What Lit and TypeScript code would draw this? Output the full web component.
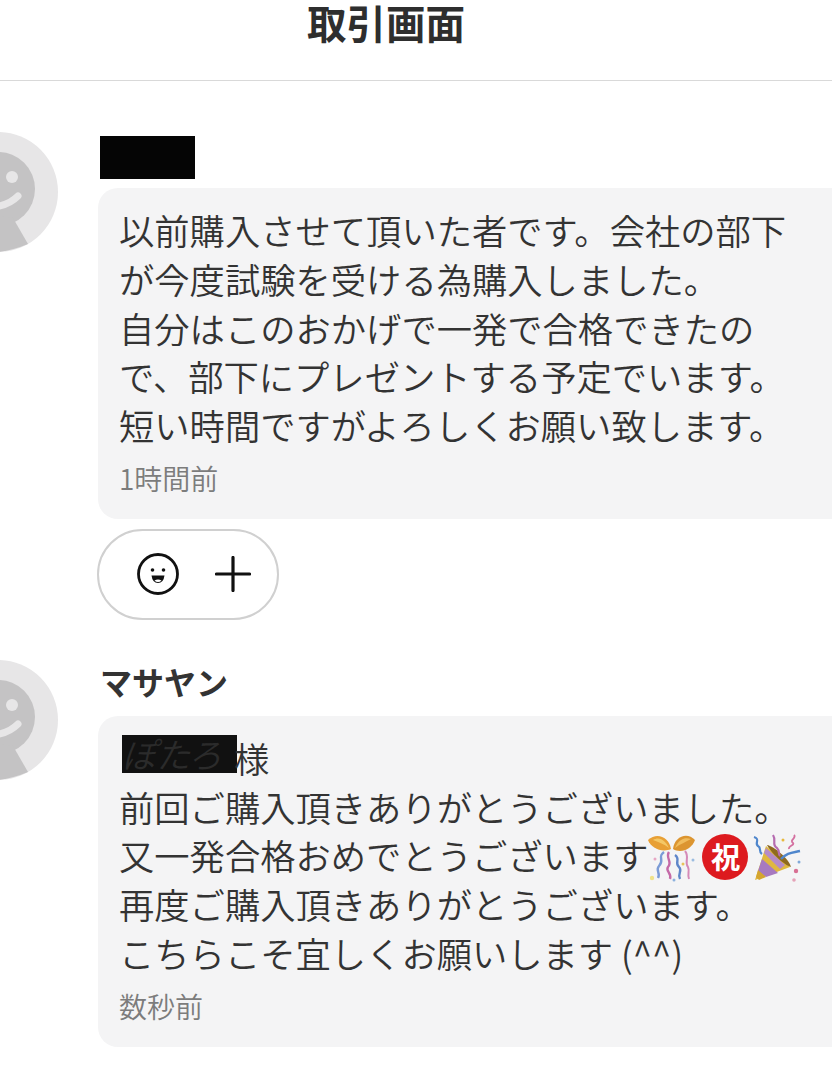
import { LitElement, html, css, svg } from "lit";
import { customElement } from "lit/decorators.js";

const avatar = svg`<svg class="avatar" viewBox="0 0 58 120" width="58" height="120">
  <circle cx="-2" cy="60" r="60" fill="#e7e6e7"/>
  <circle cx="-2" cy="57" r="37" fill="#c4c3c4"/>
  <path d="M-40 80 L13 86 L28 112 Q14 118 -2 120 L-40 120 Z" fill="#c4c3c4"/>
  <circle cx="12" cy="45" r="6" fill="#e7e6e7"/>
  <path d="M-14 75 Q6 76 18 64" fill="none" stroke="#e7e6e7" stroke-width="7" stroke-linecap="round"/>
</svg>`;

const smile = svg`<svg viewBox="0 0 44 44" width="44" height="44">
  <circle cx="22" cy="22" r="19.5" fill="none" stroke="#111" stroke-width="2.800"/>
  <circle cx="16.5" cy="18" r="1.800" fill="#111"/>
  <circle cx="27.500" cy="18" r="1.800" fill="#111"/>
  <path d="M15.500 23.500 H28.500 Q27.500 31 22 31 Q16.500 31 15.500 23.500 Z" fill="#111"/>
  <path d="M18.500 28.500 Q22 26.300 25.500 28.500 Q24 30 22 30 Q20 30 18.500 28.500 Z" fill="#fff"/>
</svg>`;

const plus = svg`<svg viewBox="0 0 36 36" width="36" height="36">
  <path d="M18 1.500 V34.500 M1.500 18 H34.500" stroke="#111" stroke-width="3.200" stroke-linecap="round"/>
</svg>`;

const confetti = svg`<svg class="emoji" viewBox="0 0 48 48" width="48" height="48">
  <path d="M23 15 C21 3 9 -2 0 6 C3 14 14 19 23 15 Z" fill="#e8a035"/>
  <path d="M25 15 C26 3 39 -3 47 6 C44 15 33 20 25 15 Z" fill="#dc9530"/>
  <path d="M21 14 C16 4 10 3 5 6 C10 8 16 10 21 14 Z" fill="#f4c866"/>
  <path d="M27 14 C31 4 38 3 43 5 C38 8 32 10 27 14 Z" fill="#f0bc5c"/>
  <path d="M16 18 C9 23 17 26 11 32 C7 36 13 39 10 44" fill="none" stroke="#7b9bd6" stroke-width="2.400"/>
  <path d="M21 18 C17 24 25 28 20 33 C17 37 24 39 22 45" fill="none" stroke="#c56aa8" stroke-width="2.400"/>
  <path d="M27 21 C33 25 26 29 31 33 C35 37 29 39 32 45" fill="none" stroke="#5f86c9" stroke-width="2.400"/>
  <path d="M37 17 C42 23 36 28 40 33 C42 37 39 40 41 45" fill="none" stroke="#d58ab8" stroke-width="2"/>
  <circle cx="4" cy="44" r="2.200" fill="#f0e28a"/>
  <circle cx="7" cy="25" r="1.500" fill="#e7a7c4"/>
  <circle cx="45" cy="26" r="1.500" fill="#9bbce0"/>
  <circle cx="26" cy="46" r="1.500" fill="#8db2de"/>
  <circle cx="35" cy="30" r="1.500" fill="#e8c45a"/>
</svg>`;

const popper = svg`<svg class="emoji" viewBox="0 0 48 48" width="48" height="48">
  <path d="M2 46 L13 12 L37 33 Z" fill="#e0b83f"/>
  <path d="M5 37 L9 25 L25 39 L13 43 Z" fill="#a77ac0"/>
  <path d="M3 43 L5 36 L13 43 L6 46 Z" fill="#d5a52f"/>
  <path d="M11 19 L13 14 L32 31 L27 35 Z" fill="#b58bc8"/>
  <path d="M14 11 C21 12 36 25 38 33 C31 31 18 19 14 11 Z" fill="#8f6a1e"/>
  <path d="M1 3 C8 5 1 9 5 12 C9 14 5 17 9 20" fill="none" stroke="#4f86cc" stroke-width="2.200"/>
  <path d="M20 1 C24 7 18 10 24 14 C27 17 25 20 27 22" fill="none" stroke="#b66cb0" stroke-width="2.200"/>
  <path d="M41 1 C44 4 36 6 40 9 C42 11 35 12 36 15" fill="none" stroke="#d470a0" stroke-width="1.800"/>
  <path d="M28 25 C34 19 38 19 47 17" fill="none" stroke="#4f86cc" stroke-width="2.400"/>
  <circle cx="43" cy="37" r="2.200" fill="#d86f93"/>
  <circle cx="41" cy="46" r="1.800" fill="#e5a3b8"/>
  <circle cx="30" cy="6" r="1.500" fill="#e8b93d"/>
  <circle cx="46" cy="28" r="1.500" fill="#7fa8d8"/>
</svg>`;

@customElement("app-root")
export class AppRoot extends LitElement {
  static styles = css`
    :host {
      display: block;
      width: 832px;
      height: 1080px;
      overflow: hidden;
      background: #fff;
      color: #333;
      font-family: "Noto Sans CJK JP", "Liberation Sans", sans-serif;
    }
    .header {
      height: 81px;
      box-sizing: border-box;
      border-bottom: 1px solid #d9d9d9;
      padding-right: 60px;
      text-align: center;
      font-size: 39.500px;
      line-height: 44px;
      font-weight: 700;
      color: #2e2e2e;
    }
    .thread { display: flex; flex-direction: column; padding-top: 51px; }
    .msg { display: grid; grid-template-columns: 98px 1fr; }
    .msg + .msg { margin-top: 40px; }
    .avatar { display: block; }
    .name {
      box-sizing: border-box;
      height: 56px;
      padding: 4px 0 0 2px;
      font-size: 32px;
      line-height: 34px;
      font-weight: 700;
      color: #333;
    }
    .redact-name {
      display: block;
      width: 95px;
      height: 43px;
      background: #050505;
    }
    .bubble {
      background: #f4f4f5;
      border-radius: 20px 0 0 20px;
      padding: 18px 0 23px 21px;
    }
    .text {
      font-size: 35.300px;
      line-height: 48.750px;
      white-space: nowrap;
      font-weight: 350;
    }
    .redact-text {
      display: inline-block;
      width: 115px;
      height: 38px;
      line-height: 38px;
      margin: 0 -3px 0 3px;
      background: #111;
      color: #2b2b2b;
      vertical-align: 5px;
      font-size: 34px;
      font-style: italic;
    }
    .time {
      font-size: 28px;
      line-height: 36px;
      margin-top: 10px;
      color: #7c7c7c;
      font-weight: 350;
    }
    .emoji {
      display: inline-block;
      vertical-align: 0;
      margin: -12px 0;
    }
    .iwai {
      display: inline-block;
      width: 46px;
      height: 46px;
      margin: -12px 5px -12px 6px;
      border-radius: 50%;
      background: #dd1a1f;
      color: #fff;
      text-align: center;
      font-size: 29px;
      line-height: 44px;
      font-weight: 700;
      vertical-align: 1px;
    }
    .react {
      display: flex;
      align-items: center;
      box-sizing: border-box;
      width: 182px;
      height: 91px;
      margin: 10px 0 0 -1px;
      padding-left: 37px;
      gap: 35px;
      border: 2px solid #d0d0d0;
      border-radius: 46px;
      background: #fff;
    }
    .react svg { display: block; }
  `;

  render() {
    return html`
      <div class="header">取引画面</div>
      <div class="thread">
        <div class="msg">
          ${avatar}
          <div>
            <div class="name"><span class="redact-name"></span></div>
            <div class="bubble">
              <div class="text">以前購入させて頂いた者です。会社の部下<br />が今度試験を受ける為購入しました。<br />自分はこのおかげで一発で合格できたの<br />で、部下にプレゼントする予定でいます。<br />短い時間ですがよろしくお願い致します。</div>
              <div class="time">1時間前</div>
            </div>
            <div class="react">${smile}${plus}</div>
          </div>
        </div>
        <div class="msg">
          ${avatar}
          <div>
            <div class="name">マサヤン</div>
            <div class="bubble">
              <div class="text"><span class="redact-text">ぽたろ</span>様<br />前回ご購入頂きありがとうございました。<br />又一発合格おめでとうございます${confetti}<span class="iwai">祝</span>${popper}<br />再度ご購入頂きありがとうございます。<br />こちらこそ宜しくお願いします (^^)</div>
              <div class="time">数秒前</div>
            </div>
          </div>
        </div>
      </div>
    `;
  }
}
